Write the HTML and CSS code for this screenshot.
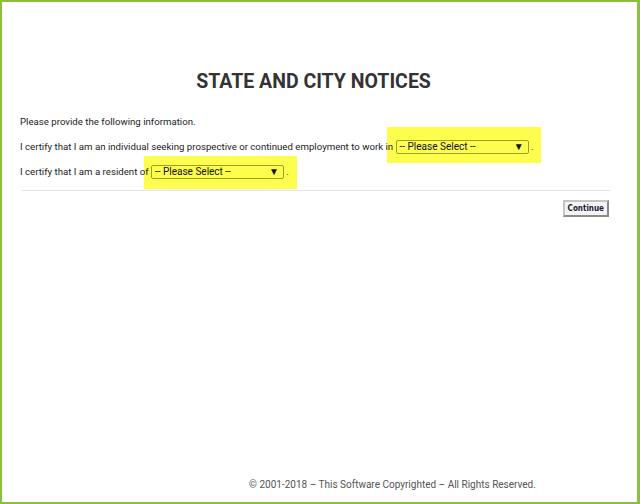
FILE: index.html
```html
<!DOCTYPE html>
<html>
<head>
<meta charset="utf-8">
<link rel="stylesheet" href="styles.css">
</head>
<body>
<div class="frame">
  <main class="content">
    <h1 class="title">STATE AND CITY NOTICES</h1>
    <p class="line">Please provide the following information.</p>
    <p class="line">I certify that I am an individual seeking prospective or continued employment to work in <span class="hl hl-1"><span class="sel">-- Please Select --<span class="arrow">&#9660;</span></span></span> .</p>
    <p class="line">I certify that I am a resident of <span class="hl hl-2"><span class="sel">-- Please Select --<span class="arrow">&#9660;</span></span></span> .</p>
    <hr class="rule">
    <div class="actions"><button class="btn">Continue</button></div>
  </main>
  <footer class="footer">&copy; 2001-2018 &ndash; This Software Copyrighted &ndash; All Rights Reserved.</footer>
</div>
</body>
</html>
```

FILE: styles.css
```css
html, body {
  margin: 0;
  padding: 0;
  background: #ffffff;
}
.frame {
  width: 640px;
  height: 504px;
  box-sizing: border-box;
  border: 2px solid #8cc03c;
  border-right-width: 3px;
  display: flex;
  flex-direction: column;
  font-family: Roboto, "Liberation Sans", sans-serif;
  color: #222;
}
.content {
  flex: 1;
  padding: 0 30px 0 18px;
  position: relative;
  z-index: 0;
}
.title {
  margin: 68px 0 0 0;
  text-align: center;
  font-size: 19.5px;
  font-weight: 700;
  color: #333;
  line-height: 24px;
}
.line {
  margin: 0;
  font-size: 9.66px;
  line-height: 25px;
  white-space: nowrap;
}
.title + .line {
  margin-top: 15px;
}
.hl {
  position: relative;
  display: inline-flex;
  vertical-align: middle;
}
.hl::before {
  content: "";
  position: absolute;
  background: #fdfd4e;
  z-index: -1;
}
.hl-1::before { left: -9px; right: -12px; top: -13px; bottom: -9px; }
.hl-2::before { left: -7px; right: -13px; top: -9px; bottom: -10px; }
.sel {
  display: inline-flex;
  align-items: center;
  justify-content: space-between;
  box-sizing: border-box;
  width: 133px;
  height: 14px;
  padding: 0 4px 0 3px;
  border: 1px solid #9e9e2a;
  border-radius: 2px;
  background: #fdfd4e;
  font-size: 10px;
  line-height: 12px;
  color: #111;
}
.arrow {
  font-size: 10px;
}
.rule {
  margin: 6px 0 0 2px;
  border: 0;
  border-top: 1px solid #e6e6e6;
  height: 0;
  width: 588px;
}
.actions {
  display: flex;
  justify-content: flex-end;
  width: 589px;
  margin-top: 9px;
}
.btn {
  font-family: Tahoma, "DejaVu Sans Condensed", "Liberation Sans", sans-serif;
  font-size: 8px;
  font-weight: 700;
  padding: 2px 3px;
  height: 17px;
  background: #f4f4f4;
  border: 2px solid #8a8a8a;
  border-top-color: #c4c4c4;
  border-left-color: #c4c4c4;
  color: #1a1a3a;
}
.footer {
  text-align: center;
  font-size: 10px;
  color: #555;
  padding: 0 0 12px 146px;
}
```
